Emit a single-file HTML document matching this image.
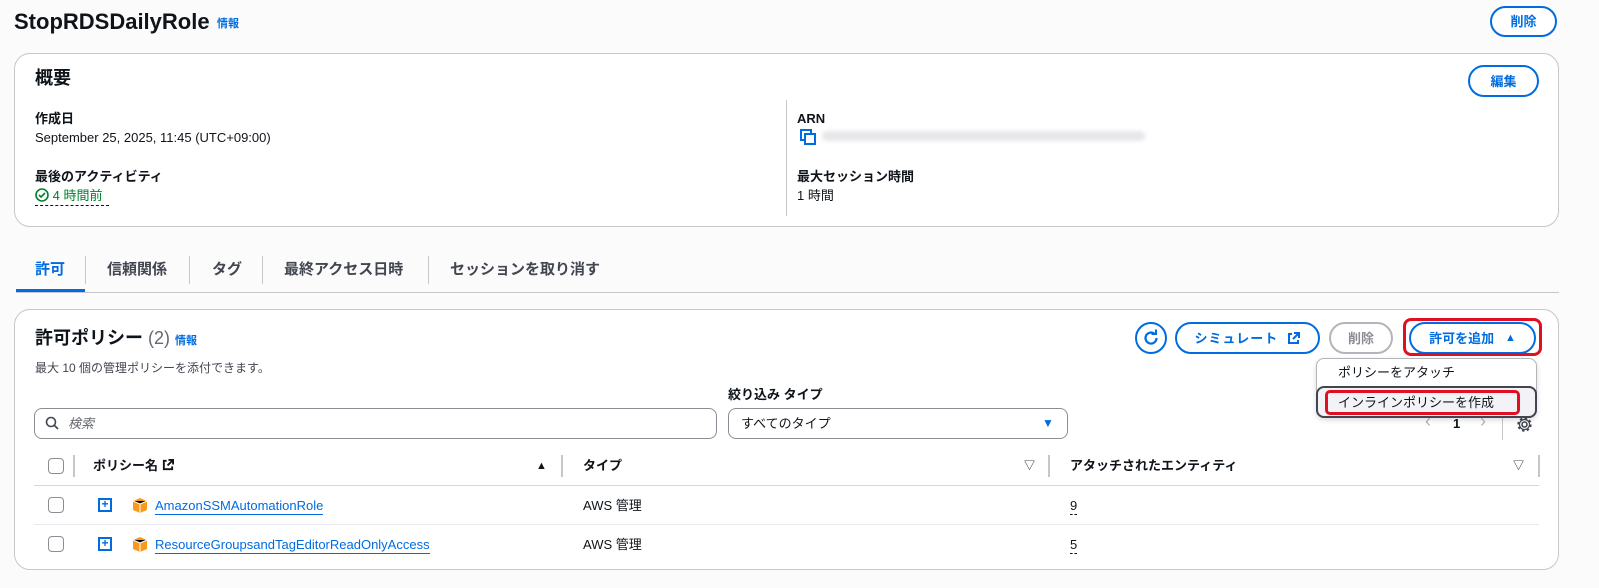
<!DOCTYPE html>
<html><head><meta charset="utf-8"><style>
*{box-sizing:border-box;margin:0;padding:0}
body{width:1599px;height:588px;background:#fbfbfb;font-family:"Liberation Sans","Noto Sans CJK JP",sans-serif;color:#0f141a;position:relative;overflow:hidden;font-size:13px;line-height:17px}
.a{position:absolute;white-space:nowrap}
.b{font-weight:bold}
.card{position:absolute;background:#fff;border:1px solid #c6c6cd;border-radius:16px}
.btn{position:absolute;border:2px solid #006ce0;border-radius:20px;color:#006ce0;font-weight:bold;font-size:13px;display:flex;align-items:center;justify-content:center;background:#fff}
.blue{color:#006ce0}
.cb{position:absolute;width:16px;height:16px;border:1.5px solid #8c8c94;border-radius:4px;background:#fff}
.sep{position:absolute;width:2px;background:#c6c6cd}
</style></head><body>
<div class="a b" style="left:14px;top:9px;font-size:22px;line-height:26px">StopRDSDailyRole</div>
<div class="a b blue" style="left:217px;top:16px;font-size:11px">情報</div>
<div class="btn" style="left:1490px;top:6px;width:67px;height:31px">削除</div>

<div class="card" style="left:14px;top:53px;width:1545px;height:174px"></div>
<div class="a b" style="left:35px;top:67px;font-size:18px;line-height:22px">概要</div>
<div class="btn" style="left:1468px;top:65px;width:71px;height:32px">編集</div>
<div class="a b" style="left:35px;top:110px">作成日</div>
<div class="a" style="left:35px;top:129px">September 25, 2025, 11:45 (UTC+09:00)</div>
<div class="a b" style="left:35px;top:168px">最後のアクティビティ</div>
<div class="a" style="left:35px;top:187px;color:#00802f"><svg width="14" height="14" viewBox="0 0 14 14" style="vertical-align:-2px"><circle cx="7" cy="7" r="6" fill="none" stroke="#00802f" stroke-width="1.6"/><path d="M4 7l2 2 4-4" fill="none" stroke="#00802f" stroke-width="1.6"/></svg> 4 時間前</div>
<div class="a" style="left:35px;top:205px;width:74px;border-top:1px dashed #0f141a"></div>
<div class="sep" style="left:786px;top:100px;height:116px;width:1px"></div>
<div class="a b" style="left:797px;top:110px">ARN</div>
<svg class="a" style="left:800px;top:129px" width="16" height="16" viewBox="0 0 16 16"><rect x="1" y="1" width="10" height="10" fill="none" stroke="#006ce0" stroke-width="2"/><rect x="5" y="5" width="10" height="10" fill="#fff" stroke="#006ce0" stroke-width="2"/></svg>
<div class="a" style="left:822px;top:131px;width:323px;height:10px;background:#e6e6ea;border-radius:5px;filter:blur(2px)"></div>
<div class="a b" style="left:797px;top:168px">最大セッション時間</div>
<div class="a" style="left:797px;top:187px">1 時間</div>

<div class="a b blue" style="left:35px;top:261px;font-size:15px">許可</div>
<div class="a" style="left:16px;top:289px;width:69px;height:4px;background:#006ce0"></div>
<div class="a b" style="left:107px;top:261px;font-size:15px;color:#424650">信頼関係</div>
<div class="a b" style="left:212px;top:261px;font-size:15px;color:#424650">タグ</div>
<div class="a b" style="left:284px;top:261px;font-size:15px;color:#424650">最終アクセス日時</div>
<div class="a b" style="left:450px;top:261px;font-size:15px;color:#424650">セッションを取り消す</div>
<div class="sep" style="left:85px;top:256px;height:28px;width:1px"></div>
<div class="sep" style="left:189px;top:256px;height:28px;width:1px"></div>
<div class="sep" style="left:262px;top:256px;height:28px;width:1px"></div>
<div class="sep" style="left:428px;top:256px;height:28px;width:1px"></div>
<div class="a" style="left:16px;top:292px;width:1543px;height:1px;background:#c6c6cd"></div>

<div class="card" style="left:14px;top:309px;width:1545px;height:261px"></div>
<div class="a" style="left:35px;top:327px;font-size:18px;line-height:22px"><b>許可ポリシー</b> <span style="color:#656871">(2)</span> <span class="b blue" style="font-size:11px">情報</span></div>
<div class="a" style="left:35px;top:360px;font-size:12px;color:#424650">最大 10 個の管理ポリシーを添付できます。</div>
<div class="btn" style="left:1135px;top:322px;width:32px;height:32px"><svg width="18" height="18" viewBox="0 0 18 18"><path d="M14.5 9A5.5 5.5 0 1 1 12.5 4.8" fill="none" stroke="#006ce0" stroke-width="2.2"/><path d="M9.5 5h4.5V0.5" fill="none" stroke="#006ce0" stroke-width="2"/></svg></div>
<div class="btn" style="left:1175px;top:322px;width:145px;height:32px;letter-spacing:1px">シミュレート&nbsp;&nbsp;<svg width="13" height="13" viewBox="0 0 13 13"><path d="M5 2H2v9h9V8M7 1h5v5M12 1L6 7" fill="none" stroke="#006ce0" stroke-width="2"/></svg></div>
<div class="btn" style="left:1329px;top:322px;width:64px;height:32px;border-color:#b4b4bb;color:#8c8c94">削除</div>
<div class="btn" style="left:1409px;top:322px;width:127px;height:32px">許可を追加&nbsp;&nbsp;&nbsp;<span style="font-size:11px">▲</span></div>
<div class="a" style="left:1403px;top:318px;width:139px;height:38px;border:3px solid #e01020;border-radius:8px"></div>

<div class="a b" style="left:728px;top:386px">絞り込み タイプ</div>
<div class="a" style="left:34px;top:408px;width:683px;height:31px;border:1px solid #8c8c94;border-radius:8px"></div>
<svg class="a" style="left:45px;top:416px" width="14" height="14" viewBox="0 0 14 14"><circle cx="6" cy="6" r="4.5" fill="none" stroke="#424650" stroke-width="1.6"/><path d="M9.5 9.5l3.5 3.5" stroke="#424650" stroke-width="1.6"/></svg>
<div class="a" style="left:68px;top:415px;color:#656871;font-style:italic">検索</div>
<div class="a" style="left:728px;top:408px;width:340px;height:31px;border:1px solid #8c8c94;border-radius:8px"></div>
<div class="a" style="left:741px;top:415px">すべてのタイプ</div>
<div class="a" style="left:1042px;top:415px;color:#006ce0;font-size:12px">▼</div>
<div class="a" style="left:1425px;top:413px;color:#b4b4bb;font-size:18px">‹</div>
<div class="a b" style="left:1453px;top:415px">1</div>
<div class="a" style="left:1480px;top:413px;color:#b4b4bb;font-size:18px">›</div>
<div class="sep" style="left:1502px;top:410px;height:30px;width:1px"></div>
<svg class="a" style="left:1516px;top:416px" width="17" height="17" viewBox="0 0 17 17"><circle cx="8.5" cy="8.5" r="2.5" fill="none" stroke="#424650" stroke-width="1.6"/><circle cx="8.5" cy="8.5" r="6" fill="none" stroke="#424650" stroke-width="2.4" stroke-dasharray="2.4 2.3"/><circle cx="8.5" cy="8.5" r="5" fill="none" stroke="#424650" stroke-width="1.2"/></svg>

<div class="a" style="left:1316px;top:358px;width:221px;height:60px;background:#fff;border:1px solid #b4b4bb;border-radius:8px;box-shadow:0 2px 6px rgba(0,0,0,.15)"></div>
<div class="a" style="left:1338px;top:364px">ポリシーをアタッチ</div>
<div class="a" style="left:1316px;top:386px;width:221px;height:32px;background:#f3f3f7;border:2px solid #424650;border-radius:8px"></div>
<div class="a" style="left:1338px;top:394px">インラインポリシーを作成</div>
<div class="a" style="left:1325px;top:390px;width:195px;height:25px;border:3px solid #e01020;border-radius:5px"></div>

<div class="cb" style="left:48px;top:458px"></div>
<div class="sep" style="left:73px;top:455px;height:22px"></div>
<div class="a b" style="left:93px;top:457px">ポリシー名 <svg width="12" height="12" viewBox="0 0 13 13" style="vertical-align:-1px"><path d="M5 2H2v9h9V8M7 1h5v5M12 1L6 7" fill="none" stroke="#0f141a" stroke-width="2"/></svg></div>
<div class="a" style="left:536px;top:458px;font-size:11px">▲</div>
<div class="sep" style="left:561px;top:455px;height:22px"></div>
<div class="a b" style="left:583px;top:457px">タイプ</div>
<div class="a" style="left:1024px;top:458px;font-size:11px">▽</div>
<div class="sep" style="left:1048px;top:455px;height:22px"></div>
<div class="a b" style="left:1070px;top:457px">アタッチされたエンティティ</div>
<div class="a" style="left:1513px;top:458px;font-size:11px">▽</div>
<div class="sep" style="left:1538px;top:455px;height:22px"></div>
<div class="a" style="left:34px;top:485px;width:1505px;height:1px;background:#d5d5db"></div>
<div class="a" style="left:34px;top:524px;width:1505px;height:1px;background:#e9e9ed"></div>

<div class="cb" style="left:48px;top:497px"></div>
<div class="a" style="left:98px;top:498px;width:14px;height:14px;border:2px solid #006ce0;color:#006ce0;font-size:12px;line-height:9px;text-align:center;font-weight:bold">+</div>
<svg class="a" style="left:132px;top:497px" width="16" height="17" viewBox="0 0 16 17"><path d="M8 1l7 3v9l-7 3-7-3V4z" fill="#f89b1c"/><path d="M1 4l7 3 7-3M8 7v9" stroke="#fff" stroke-width="1"/></svg>
<div class="a blue" style="left:155px;top:497px;border-bottom:1px solid #006ce0">AmazonSSMAutomationRole</div>
<div class="a" style="left:583px;top:497px">AWS 管理</div>
<div class="a" style="left:1070px;top:497px;border-bottom:1px dashed #0f141a">9</div>

<div class="cb" style="left:48px;top:536px"></div>
<div class="a" style="left:98px;top:537px;width:14px;height:14px;border:2px solid #006ce0;color:#006ce0;font-size:12px;line-height:9px;text-align:center;font-weight:bold">+</div>
<svg class="a" style="left:132px;top:536px" width="16" height="17" viewBox="0 0 16 17"><path d="M8 1l7 3v9l-7 3-7-3V4z" fill="#f89b1c"/><path d="M1 4l7 3 7-3M8 7v9" stroke="#fff" stroke-width="1"/></svg>
<div class="a blue" style="left:155px;top:536px;border-bottom:1px solid #006ce0">ResourceGroupsandTagEditorReadOnlyAccess</div>
<div class="a" style="left:583px;top:536px">AWS 管理</div>
<div class="a" style="left:1070px;top:536px;border-bottom:1px dashed #0f141a">5</div>
</body></html>
